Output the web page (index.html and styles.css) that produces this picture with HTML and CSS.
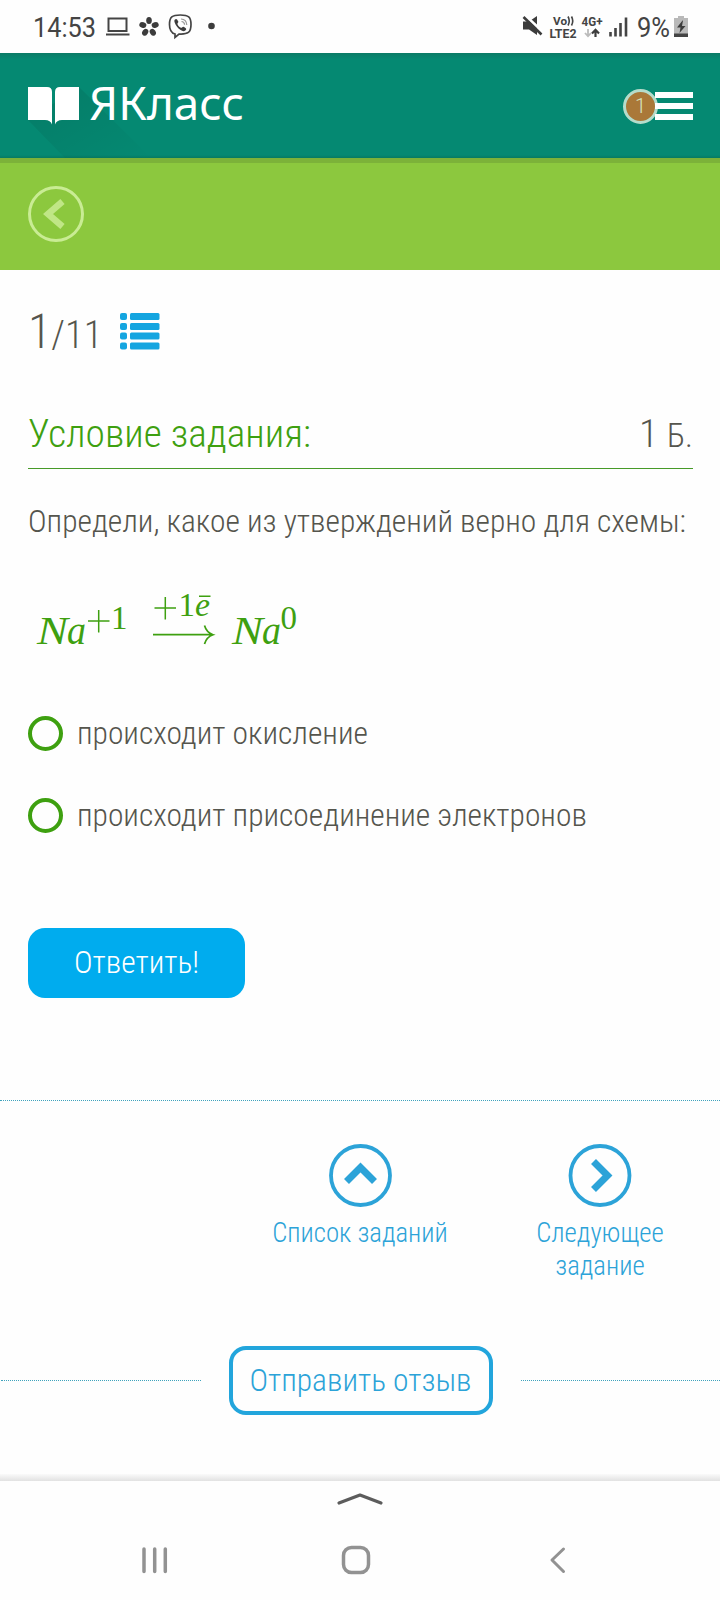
FILE: index.html
```html
<!DOCTYPE html>
<html lang="ru">
<head>
  <meta charset="UTF-8" />
  <meta name="viewport" content="width=device-width, initial-scale=1.0"/>
  <title>ЯКласс</title>
  <link rel="stylesheet" href="styles.css">
</head>
<body>

  <div class="status">
    <svg width="720" height="53" viewBox="0 0 720 53">
      <g class="status-text">
        <text x="33" y="37" font-size="27" textLength="63" lengthAdjust="spacingAndGlyphs">14:53</text>
        <text x="637" y="37" font-size="27" textLength="33" lengthAdjust="spacingAndGlyphs">9%</text>
        <g class="status-label">
          <text x="553" y="24.500" font-size="11" textLength="14" lengthAdjust="spacingAndGlyphs">Vo</text>
          <text x="549.500" y="37.500" font-size="12" textLength="27" lengthAdjust="spacingAndGlyphs">LTE2</text>
          <text x="581.500" y="25.500" font-size="12" textLength="21" lengthAdjust="spacingAndGlyphs">4G+</text>
        </g>
      </g>
      <!-- laptop -->
      <path d="M108.500 18.500h18v12.500h-18z M106 34.500h23.500" fill="none" stroke="#444" stroke-width="2"/>
      <!-- flower -->
      <g fill="#3c3c3c">
        <ellipse cx="149" cy="20.500" rx="2.800" ry="3.600"/>
        <ellipse cx="149" cy="20.500" rx="2.800" ry="3.600" transform="rotate(72 149 27)"/>
        <ellipse cx="149" cy="20.500" rx="2.800" ry="3.600" transform="rotate(144 149 27)"/>
        <ellipse cx="149" cy="20.500" rx="2.800" ry="3.600" transform="rotate(216 149 27)"/>
        <ellipse cx="149" cy="20.500" rx="2.800" ry="3.600" transform="rotate(288 149 27)"/>
      </g>
      <!-- viber -->
      <path d="M175 34v3.500l4-3.500c9 .5 12-1.500 12-9.500 0-7.500-2.500-9.500-10.700-9.500S169.500 17 169.500 24.500c0 6 1.500 8.500 5.500 9.500z" fill="none" stroke="#444" stroke-width="1.700"/>
      <path d="M175 19.500c1.500-1.500 2.500.5 3.300 2 .5 1.200-1.300 1.500-.8 2.700.7 1.800 2 3 3.500 3.600 1.200.4 1.500-1.600 2.900-.8 1.600 1 3.200 1.800 1.700 3.200-1.500 1.600-3.200 1.200-5-.1-3-2-5-4.600-6-7.800-.3-1.100-.4-2 .4-2.800z" fill="#3c3c3c"/>
      <path d="M181 19c3.500.2 5.600 2.200 5.800 6M181.500 21.500c2 .2 3 1.300 3.100 3.300" fill="none" stroke="#999" stroke-width="1.200"/>
      <circle cx="211.500" cy="26" r="3.300" fill="#3c3c3c"/>
      <!-- muted -->
      <path d="M523 21.500h6l8-5.500v19l-8-5.500h-6z" fill="#3c3c3c"/>
      <path d="M523.500 14l19.500 18" stroke="#fff" stroke-width="3"/>
      <path d="M523.500 17l18 17.500" stroke="#3c3c3c" stroke-width="2.600"/>
      <path d="M568 16.500q2.500 4.500 0 9M571.500 16.500q2.500 4.500 0 9" fill="none" stroke="#444" stroke-width="1.600"/>
      <!-- data arrows -->
      <path d="M588 29v7M585 33l3 3.200 3-3.200" fill="none" stroke="#bbb" stroke-width="1.800"/>
      <path d="M595.500 37v-6M592 33.500l3.500-3.700 3.500 3.700" fill="none" stroke="#3c3c3c" stroke-width="2.200"/>
      <!-- signal -->
      <path d="M610.500 32v4.500M615.500 28v8.500M620.500 23v13.500M626 17.500v19" stroke="#444" stroke-width="2.600"/>
      <!-- battery -->
      <path d="M674 18h4v-2h6v2h4v18.500h-14z" fill="#b9b9b9"/>
      <path d="M674 33.500h14v3.500h-14z" fill="#444"/>
      <path d="M682.500 20.500l-5.500 7h3.500l-1 5.500 6-7h-3.500l1-5.500z" fill="#3c3c3c"/>
    </svg>
  </div>

  <header class="header">
    <svg class="logo" width="280" height="105" viewBox="0 0 280 105">
      <defs>
        <linearGradient id="fade" x1="0" y1="0" x2="1" y2="1">
          <stop offset="0" stop-color="#000" stop-opacity=".1"/>
          <stop offset="1" stop-color="#000" stop-opacity="0"/>
        </linearGradient>
      </defs>
      <path d="M28 67l51-33 72 71H65z" fill="url(#fade)"/>
      <path d="M28 34h19q5 0 5 5v32.500q-1.500-4.500-7-4.500H28z M79 34H60q-5 0-5 5v32.500q1.500-4.500 7-4.500h17z" fill="#fff"/>
      <text class="logo-text" x="89" y="66.700" font-size="46" textLength="155" lengthAdjust="spacingAndGlyphs">ЯКласс</text>
    </svg>
    <div class="menu">
      <span class="badge">1</span>
      <div class="burger"><i></i><i></i><i></i></div>
    </div>
  </header>

  <nav class="subheader">
    <svg width="56" height="56" viewBox="0 0 56 56" fill="none">
      <circle cx="28" cy="28" r="26.500" stroke="#c9ec94" stroke-width="3"/>
      <path d="M34.500 15.500L20 28l14.500 12.500" stroke="#c0e686" stroke-width="6.500"/>
    </svg>
  </nav>

  <main class="task">
    <div class="counter">
      <span class="current">1</span><span class="total">/11</span>
      <svg width="40" height="37" viewBox="0 0 40 37" fill="#14a5e0">
        <rect x="0" y="0" width="7" height="7" rx="2"/><rect x="10" y="0" width="29.500" height="7" rx="1.500"/>
        <rect x="0" y="10" width="7" height="7" rx="2"/><rect x="10" y="10" width="29.500" height="7" rx="1.500"/>
        <rect x="0" y="19.500" width="7" height="7" rx="2"/><rect x="10" y="19.500" width="29.500" height="7" rx="1.500"/>
        <rect x="0" y="29.500" width="7" height="7" rx="2"/><rect x="10" y="29.500" width="29.500" height="7" rx="1.500"/>
      </svg>
    </div>

    <div class="task-title">
      <h2>Условие задания:</h2>
      <span class="points">1 <small>Б.</small></span>
    </div>

    <p class="question">Определи, какое из утверждений верно для схемы:</p>

    <svg class="formula" width="280" height="70" viewBox="28 584 280 70">
      <g font-style="italic">
        <text x="37" y="643" font-size="40" textLength="31" lengthAdjust="spacingAndGlyphs">N</text>
        <text x="67" y="643" font-size="40" textLength="19" lengthAdjust="spacingAndGlyphs">a</text>
        <text x="195" y="615" font-size="33" textLength="15" lengthAdjust="spacingAndGlyphs">e</text>
        <text x="232" y="643" font-size="40" textLength="31" lengthAdjust="spacingAndGlyphs">N</text>
        <text x="262" y="643" font-size="40" textLength="19" lengthAdjust="spacingAndGlyphs">a</text>
      </g>
      <text x="111" y="628" font-size="33">1</text>
      <text x="178.500" y="615" font-size="33">1</text>
      <text x="280.500" y="628" font-size="33">0</text>
      <path d="M88 620h21.500M98.700 609v22.500M154.500 607h21.500M165.300 596v22.500M199 595.300h11.500" stroke-width="1.500"/>
      <path d="M153 633.700h59M204.500 624.500q2 7 8.500 9.200q-6.500 2.200-8.500 9.300" stroke-width="1.700"/>
    </svg>

    <label class="answer"><span class="radio"></span>происходит окисление</label>
    <label class="answer"><span class="radio"></span>происходит присоединение электронов</label>

    <button class="submit">Ответить!</button>
  </main>

  <div class="task-nav">
    <a class="list-link">
      <svg width="64" height="64" viewBox="0 0 64 64" fill="none" stroke="#2ca3d8">
        <circle cx="32.500" cy="31.500" r="29.500" stroke-width="3.800"/>
        <path d="M18.500 37.500L32.500 23.500l14 14" stroke-width="7"/>
      </svg>
      Список заданий
    </a>
    <a class="next-link">
      <svg width="64" height="64" viewBox="0 0 64 64" fill="none" stroke="#2ca3d8">
        <circle cx="32" cy="31.500" r="29.500" stroke-width="3.800"/>
        <path d="M25.500 17.500l14 14-14 14" stroke-width="7"/>
      </svg>
      Следующее задание
    </a>
  </div>

  <div class="feedback">
    <button>Отправить отзыв</button>
  </div>

  <footer class="phone-nav">
    <svg width="720" height="119" viewBox="0 1481 720 119" fill="none" stroke="#929292" stroke-width="3.500" stroke-linecap="round" stroke-linejoin="round">
      <path d="M339 1503l21-8 21 8" stroke="#5c5c5c" stroke-width="3.200"/>
      <path d="M144 1549v22.500M154.700 1549v22.500M165.300 1549v22.500"/>
      <rect x="343.500" y="1547.500" width="25" height="25" rx="8"/>
      <path d="M563.500 1549l-11.500 11 11.500 11.500" stroke-width="3"/>
    </svg>
  </footer>

</body>
</html>
```
FILE: styles.css
```css
:root {
  --teal: #058972;
  --lime: #8cc83e;
  --green: #3ea010;
  --blue: #2ca3d8;
  --button: #00acee;
  --text: #55554d;
}

* {
  box-sizing: border-box;
}

body {
  margin: 0;
  width: 720px;
  height: 1600px;
  overflow: hidden;
  display: flex;
  flex-direction: column;
  background: #fefefe;
  color: var(--text);
  font-family: Roboto, sans-serif;
  font-stretch: 75%;
  font-weight: 300;
  font-size: 31.5px;
}

svg {
  display: block;
  flex: none;
}

.status {
  height: 53px;
}

.status-text {
  fill: #444;
  font-stretch: 100%;
  font-weight: 400;
}

.status-label {
  font-weight: 700;
}

.header {
  height: 105px;
  display: flex;
  justify-content: space-between;
  align-items: center;
  padding-right: 27px;
  background: linear-gradient(#0b7b66, var(--teal) 6px, var(--teal) 102px, #067a62);
}

.logo-text {
  fill: #fff;
  font-family: "Noto Sans", sans-serif;
  font-stretch: 100%;
  font-weight: 400;
}

.menu {
  display: flex;
  align-items: center;
  padding-top: 1px;
}

.badge {
  width: 35px;
  height: 35px;
  margin-right: -3px;
  border: 3px solid #b5dccb;
  border-radius: 50%;
  background: #aa7838;
  color: #d5e5c0;
  font-size: 20px;
  line-height: 29px;
  text-align: center;
  font-stretch: 100%;
}

.burger {
  display: flex;
  flex-direction: column;
  gap: 5px;
}

.burger i {
  width: 38px;
  height: 6px;
  background: #fff;
}

.subheader {
  height: 112px;
  padding: 28px;
  background: var(--lime);
  box-shadow: inset 0 5px 0 #7cb239;
}

.task {
  height: 830px;
  padding: 0 27px 0 28px;
}

.counter {
  display: flex;
  align-items: baseline;
  width: 132px;
  height: 100px;
  padding-top: 34px;
}

.counter .current {
  font-size: 48px;
  line-height: 55px;
}

.counter .total {
  font-size: 38.5px;
  line-height: 55px;
}

.counter svg {
  align-self: flex-start;
  margin: 9px 0 0 auto;
}

.task-title {
  display: flex;
  justify-content: space-between;
  align-items: baseline;
  height: 99px;
  padding-top: 40px;
  border-bottom: 1px solid #479a28;
}

.task-title h2 {
  margin: 0;
  color: var(--green);
  font-size: 39.4px;
  font-weight: 300;
  line-height: 46px;
}

.points {
  font-size: 39.4px;
}

.points small {
  font-size: 33px;
}

.question {
  margin: 0;
  padding-top: 34px;
  height: 116px;
  line-height: 38px;
  white-space: nowrap;
}

.formula {
  margin-bottom: 37px;
  fill: var(--green);
  font-family: "Liberation Serif", serif;
  font-stretch: 100%;
  font-weight: 400;
}

.formula path {
  fill: none;
  stroke: var(--green);
}

.answer {
  display: flex;
  align-items: center;
  height: 82px;
  gap: 14px;
  white-space: nowrap;
}

.radio {
  width: 35px;
  height: 35px;
  border: 4px solid var(--green);
  border-radius: 50%;
}

.submit {
  display: block;
  width: 217px;
  height: 70px;
  margin-top: 72px;
  padding: 0 0 2px;
  border: none;
  border-radius: 17px;
  background: var(--button);
  color: #fff;
  font: inherit;
}

.task-nav {
  display: grid;
  grid-template-columns: repeat(3, 240px);
  height: 246px;
  padding-top: 43px;
  border-top: 1px dotted #3fa3bd;
}

.task-nav a {
  display: flex;
  flex-direction: column;
  align-items: center;
  padding: 0 50px;
  color: var(--blue);
  font-size: 26.8px;
  line-height: 33.5px;
  text-align: center;
}

.task-nav svg {
  margin-bottom: 8.5px;
}

.task-nav .list-link {
  grid-column: 2;
  padding: 0;
}

.feedback {
  display: flex;
  align-items: center;
  gap: 28px;
  height: 69px;
  padding-left: 1px;
}

.feedback::before,
.feedback::after {
  content: "";
  flex: 1;
  border-top: 1px dotted #3fa3bd;
}

.feedback button {
  width: 264px;
  height: 69px;
  padding: 0;
  border: 4px solid #22a5dc;
  border-radius: 17px;
  background: none;
  color: var(--blue);
  font: inherit;
}

.phone-nav {
  margin-top: 59px;
  padding-top: 7px;
  background: linear-gradient(#fafafa, #e2e2e2 7px, #fefefe 7px);
}
```
